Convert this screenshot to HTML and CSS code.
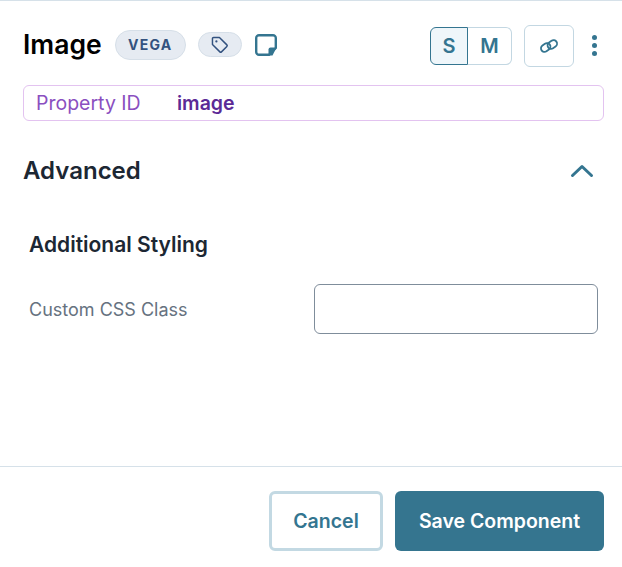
FILE: index.html
```html
<!DOCTYPE html>
<html lang="en">
<head>
<meta charset="utf-8">
<title>Image</title>
<link rel="stylesheet" href="styles.css">
</head>
<body>
<div class="panel">
  <header class="head">
    <div class="title-group">
      <h1 class="title">Image</h1>
      <span class="pill pill-text">VEGA</span>
      <span class="pill pill-icon">
        <svg width="18" height="18" viewBox="0 0 16 16" fill="none" stroke="#33527f" stroke-width="1.3" stroke-linejoin="round"><path d="M1.3 2.3a1 1 0 0 1 1-1h5.2l6.6 6.6a1 1 0 0 1 0 1.4l-4.8 4.8a1 1 0 0 1-1.4 0L1.3 7.500z"/><circle cx="4.800" cy="4.800" r="1" fill="#33527f" stroke="none"/></svg>
      </span>
      <svg class="note" width="22" height="22" viewBox="0 0 22 22" fill="none"><path d="M4 1.200h14A2.800 2.800 0 0 1 20.800 4v10L14 20.800H4A2.800 2.800 0 0 1 1.200 18V4A2.800 2.800 0 0 1 4 1.200z" stroke="#347590" stroke-width="2.400" stroke-linejoin="round"/><path d="M21.500 13.500h-6a2 2 0 0 0-2 2v6h4z" fill="#347590"/></svg>
    </div>
    <div class="tools">
      <div class="sizes">
        <span class="size size-on">S</span>
        <span class="size">M</span>
      </div>
      <button class="link-btn" type="button" aria-label="Link">
        <svg width="20" height="16" viewBox="0 0 20 16" fill="none" stroke="#347590" stroke-width="1.800"><rect x="1.700" y="6" width="10" height="7" rx="3.500" transform="rotate(-35 6.700 9.500)"/><rect x="8.300" y="3" width="10" height="7" rx="3.500" transform="rotate(-35 13.300 6.500)"/></svg>
      </button>
      <span class="kebab"><i></i><i></i><i></i></span>
    </div>
  </header>

  <div class="prop">
    <span class="prop-label">Property ID</span>
    <span class="prop-value">image</span>
  </div>

  <section class="adv">
    <div class="adv-head">
      <h2 class="adv-title">Advanced</h2>
      <svg width="24" height="14" viewBox="0 0 24 14" fill="none" stroke="#347590" stroke-width="3" stroke-linecap="round" stroke-linejoin="round"><path d="M2.500 11.500 12 2.500l9.500 9"/></svg>
    </div>
    <div class="adv-body">
      <h3 class="sub">Additional Styling</h3>
      <div class="row">
        <label class="row-label" for="css">Custom CSS Class</label>
        <input class="row-input" id="css" type="text">
      </div>
    </div>
  </section>

  <footer class="foot">
    <button class="btn btn-cancel" type="button">Cancel</button>
    <button class="btn btn-save" type="button">Save Component</button>
  </footer>
</div>
</body>
</html>
```

FILE: styles.css
```css
* { box-sizing: border-box; }
html, body { margin: 0; padding: 0; background: #fff; }
body { font-family: Inter, "Liberation Sans", sans-serif; width: 622px; height: 567px; overflow: hidden; }
.panel { height: 567px; border-top: 1px solid #d6e1e9; display: flex; flex-direction: column; }
.head { display: flex; justify-content: space-between; align-items: center; height: 84px; padding: 5px 24px 0 23px; }
.title-group { display: flex; align-items: center; margin-top: -2px; }
.title { margin: 0 13px 2px 0; font-size: 26.5px; font-weight: 600; color: #000; line-height: 32px; }
.pill { display: flex; align-items: center; justify-content: center; background: #e6ebf2; border: 1px solid #d6dfe8; border-radius: 15px; }
.pill-text { width: 71px; height: 30px; font-size: 14px; font-weight: 700; letter-spacing: 1.2px; color: #33527f; }
.pill-icon { width: 44px; height: 25px; margin-left: 12px; }
.note { margin-left: 13px; }
.tools { display: flex; align-items: center; }
.sizes { display: flex; width: 82px; height: 38px; }
.size { flex: 1; display: flex; align-items: center; justify-content: center; font-size: 20px; font-weight: 600; color: #347590; border: 1px solid #c3d7e2; border-left: 0; border-radius: 0 6px 6px 0; }
.size-on { flex: 0 0 38px; background: #eff6fa; border: 1px solid #347590; border-radius: 6px 0 0 6px; }
.link-btn { width: 50px; height: 42px; margin-left: 12px; padding: 0; display: flex; align-items: center; justify-content: center; background: #fff; border: 1px solid #c3d7e2; border-radius: 6px; }
.kebab { width: 6px; margin-left: 18px; display: flex; flex-direction: column; gap: 3px; }
.kebab i { width: 5px; height: 5px; border-radius: 50%; background: #347590; }
.prop { display: flex; align-items: center; height: 36px; margin: 0 18px 0 23px; padding-left: 12px; border: 1px solid #e3c3f0; border-radius: 6px; font-size: 19.5px; }
.prop-label { width: 141px; color: #8a4fc0; }
.prop-value { font-weight: 600; color: #5b2a96; }
.adv { flex: 1; display: flex; flex-direction: column; }
.adv-head { display: flex; justify-content: space-between; align-items: center; height: 34px; margin-top: 33px; padding: 0 28px 0 23px; }
.adv-title { margin: 0 0 2px; font-size: 24px; font-weight: 600; color: #1c2733; }
.adv-body { padding: 0 24px 0 29px; margin-top: 44px; }
.sub { margin: 0; font-size: 21px; font-weight: 600; color: #1c2733; line-height: 26px; }
.row { display: flex; justify-content: space-between; align-items: center; margin-top: 26px; }
.row-label { font-size: 18px; color: #66727f; }
.row-input { width: 284px; height: 50px; border: 1px solid #7f8d9b; border-radius: 6px; background: #fff; }
.foot { display: flex; justify-content: flex-end; gap: 12px; height: 101px; padding: 24px 18px 0 0; border-top: 1px solid #d6e1e9; }
.btn { height: 60px; font-family: inherit; font-size: 19.5px; font-weight: 600; border-radius: 6px; padding: 0; }
.btn-cancel { width: 114px; background: #fff; color: #347590; border: 3px solid #c3d9e3; }
.btn-save { width: 209px; background: #35758f; color: #fff; border: 0; }
```
